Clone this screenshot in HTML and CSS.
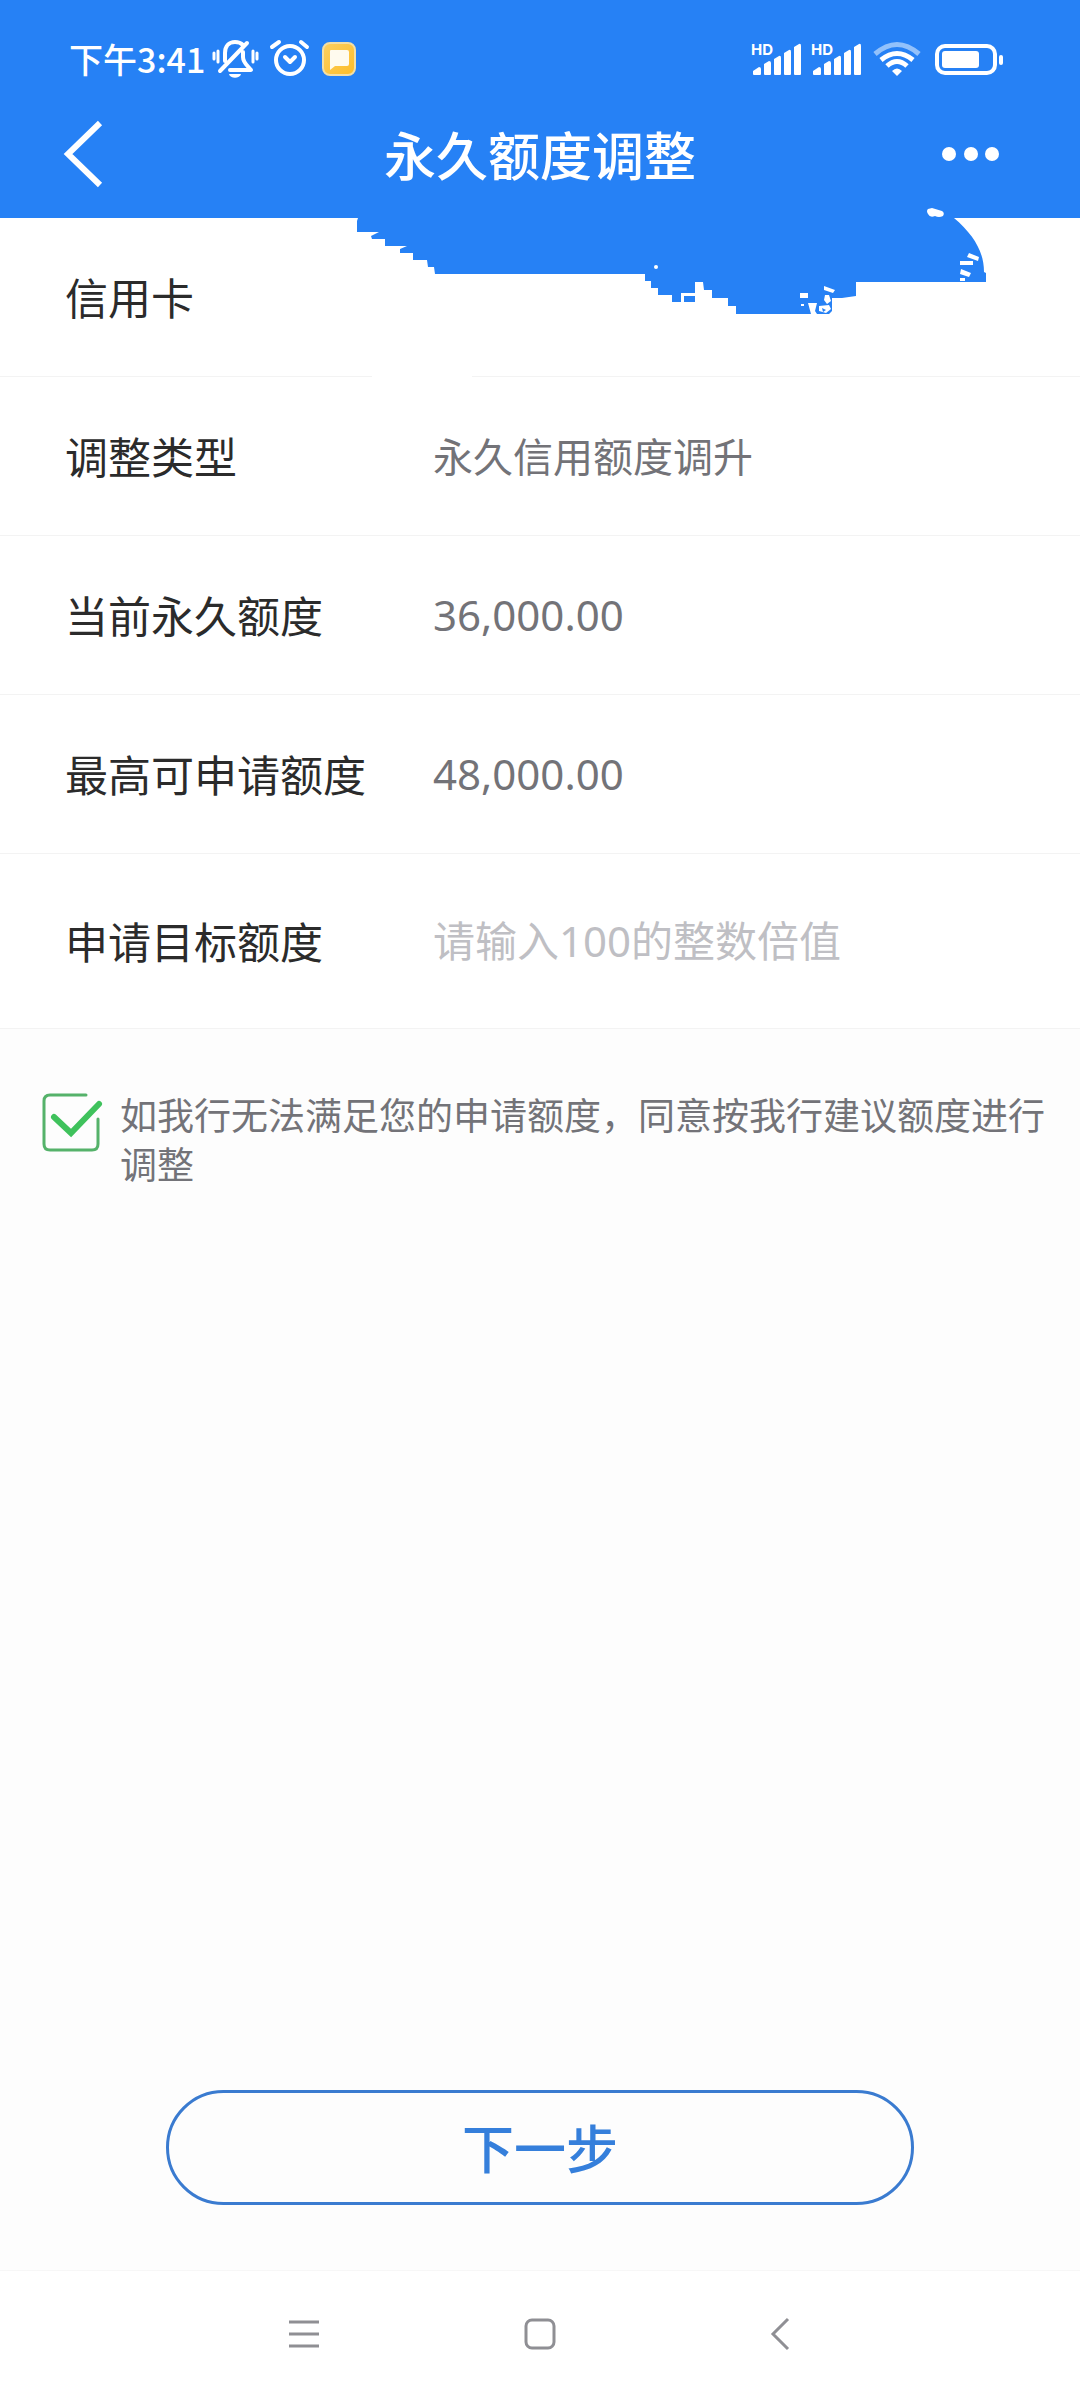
FILE: index.html
```html
<!DOCTYPE html>
<html lang="zh-CN">
  <head>
    <meta charset="UTF-8" />
    <meta name="viewport" content="width=device-width, initial-scale=1.0" />
    <title>永久额度调整</title>
    <link rel="stylesheet" href="styles.css">
  </head>
  <body>
    <header class="header">
      <!-- 状态栏 -->
      <div class="status">
        <span class="time">下午3:41</span>
        <svg class="icon" width="51" height="44" viewBox="0 0 51 44" fill="none" stroke="#fff" stroke-width="4" stroke-linecap="round" stroke-linejoin="round">
          <path d="M14 24V16C14 9 18 5 24 5C27 5 30 6 32 8M32 15V20C32 26 37 29 40 33H19M36 6L9 34" />
          <path d="M18 37H30C29 42 19 42 18 37Z" fill="#fff" stroke="none" />
          <path d="M3 16V22M7 14V25M42 14V25M46 16V22" stroke-width="3" />
        </svg>
        <svg class="icon" width="48" height="44" viewBox="0 0 48 44" fill="none" stroke="#fff" stroke-width="4" stroke-linecap="round" stroke-linejoin="round">
          <circle cx="22" cy="23" r="14" />
          <path d="M17 20L22 25L27 20M4 10L11 5M33 5L39 10" />
        </svg>
        <svg class="icon" width="34" height="34" viewBox="0 0 34 34">
          <defs>
            <linearGradient id="note" x1="0" y1="0" x2="1" y2="1">
              <stop offset="0" stop-color="#fbcf62" />
              <stop offset="1" stop-color="#fdbd28" />
            </linearGradient>
          </defs>
          <rect x="1" y="1" width="32" height="32" rx="7" fill="url(#note)" stroke="#f3dfa5" stroke-width="2" />
          <path d="M9 8H25Q27 8 27 10V22Q27 24 25 24H13L8 28V9Q8 8 9 8Z" fill="#fffbee" />
        </svg>

        <div class="status-right">
          <svg class="icon" width="50" height="46" viewBox="0 -6 50 46" fill="#fff">
            <text class="hd" x="0" y="13">HD</text>
            <path d="M2 29L8 25Q10 25 10 27V32Q10 33 9 33H3Q2 33 2 32ZM13 22L18 19Q20 19 20 21V32Q20 33 19 33H14Q13 33 13 32ZM23 17L28 14Q30 13 30 16V32Q30 33 29 33H24Q23 33 23 32ZM33 11L38 8Q40 7 40 10V32Q40 33 39 33H34Q33 33 33 32ZM43 5L48 2Q50 1 50 4V32Q50 33 49 33H44Q43 33 43 32Z" />
          </svg>
          <svg class="icon" width="50" height="46" viewBox="0 -6 50 46" fill="#fff">
            <text class="hd" x="0" y="13">HD</text>
            <path d="M2 29L8 25Q10 25 10 27V32Q10 33 9 33H3Q2 33 2 32ZM13 22L18 19Q20 19 20 21V32Q20 33 19 33H14Q13 33 13 32ZM23 17L28 14Q30 13 30 16V32Q30 33 29 33H24Q23 33 23 32ZM33 11L38 8Q40 7 40 10V32Q40 33 39 33H34Q33 33 33 32ZM43 5L48 2Q50 1 50 4V32Q50 33 49 33H44Q43 33 43 32Z" />
          </svg>
          <svg class="icon" width="54" height="36" viewBox="0 0 54 36" fill="none" stroke="#fff" stroke-width="5">
            <path d="M4 13Q26 -6 48 13" stroke="#92c1fb" />
            <path d="M10 19Q26 6 42 19" />
            <path d="M16 25Q26 16 36 25" />
            <path d="M21 30Q26 25 31 30L26 35Z" fill="#fff" stroke="none" />
          </svg>
          <svg class="icon" width="68" height="32" viewBox="0 0 68 32">
            <rect x="2" y="3" width="58" height="27" rx="8" fill="none" stroke="#fff" stroke-width="4" />
            <rect x="7" y="8" width="37" height="17" rx="3" fill="#fff" />
            <rect x="64" y="12" width="4" height="10" rx="2" fill="#fff" />
          </svg>
        </div>
      </div>

      <!-- 标题栏 -->
      <div class="titlebar">
        <button class="back" type="button" aria-label="返回">
          <svg class="icon" width="42" height="70" viewBox="0 0 42 70" fill="none" stroke="#fff" stroke-width="6">
            <path d="M37 4L5 35L37 66" />
          </svg>
        </button>
        <h1 class="title">永久额度调整</h1>
        <button class="more" type="button" aria-label="更多">
          <svg class="icon" width="60" height="20" viewBox="0 0 60 20" fill="#fff">
            <circle cx="9" cy="10" r="7" />
            <circle cx="31" cy="10" r="7" />
            <circle cx="52" cy="10" r="7" />
          </svg>
        </button>
      </div>

      <!-- 卡号上的涂抹 -->
      <svg class="scribble" width="632" height="174" viewBox="356 206 632 174" fill="#2681f5">
        <path d="M358 206V218L357 221V232H379L371 236L372 239H385V246H407L400 249V253H413V260H427L428 267H434L435 274H645V281H651V288H658V295H672V302H681V293H695V282H703L704 290H712V298H728V306H736V314H829L832 311V298H842L856 296V282H986V273L984 272C984 252 974 235 954 218V206Z" />
        <rect x="684" y="296" width="11" height="6" />
        <g fill="#fff">
          <circle cx="656" cy="267" r="2" />
          <path d="M928 209L932 208L942 211Q945 213 943 216Q939 218 935 216Q930 218 928 214Q926 211 928 209Z" />
          <path d="M969 253L979 257L978 261L967 257ZM960 261H973V265H960ZM961 269L971 273L969 277L960 274ZM960 278H965V281H960Z" />
          <path d="M800 293H808V298H800ZM801 304H804V306H801ZM808 303H817L815 311L817 314H811ZM824 286L835 290L833 293L824 290ZM825 295H829L831 301L827 304L824 300ZM819 306L829 305L831 309L826 313L819 311Z" />
          <!-- 第一行分隔线的缺口 -->
          <rect x="372" y="374" width="100" height="5" />
        </g>
        <path d="M822 308L826 310L823 312Z" />
      </svg>
    </header>

    <main class="main">
      <form class="form">
        <div class="row">
          <span class="label">信用卡</span>
        </div>
        <div class="row">
          <span class="label">调整类型</span>
          <span class="value">永久信用额度调升</span>
        </div>
        <div class="row">
          <span class="label">当前永久额度</span>
          <span class="value number">36,000.00</span>
        </div>
        <div class="row">
          <span class="label">最高可申请额度</span>
          <span class="value number">48,000.00</span>
        </div>
        <div class="row row-input">
          <label class="label" for="amount">申请目标额度</label>
          <input class="amount" id="amount" type="text" inputmode="numeric" placeholder="请输入100的整数倍值" />
        </div>
      </form>

      <label class="agree">
        <span class="check">
          <input class="check-input" type="checkbox" checked />
          <svg class="check-icon" width="64" height="64" viewBox="0 0 64 64" fill="none" stroke-linecap="round">
            <path d="M46 5H10Q4 5 4 11V54Q4 60 10 60H52Q58 60 58 54V29" stroke="#55b26a" stroke-width="3" />
            <path class="tick" d="M14 27L31 43L59 14" stroke="#3fc25c" stroke-width="6" />
          </svg>
        </span>
        <span class="agree-text">如我行无法满足您的申请额度，同意按我行建议额度进行调整</span>
      </label>

      <button class="next" type="button">下一步</button>
    </main>

    <!-- 系统导航 -->
    <nav class="nav">
      <button class="nav-btn" type="button" aria-label="菜单">
        <svg class="icon" width="48" height="48" viewBox="0 0 48 48" stroke="#8f8f94" stroke-width="3">
          <path d="M9 12H39M9 24H39M9 36H39" />
        </svg>
      </button>
      <button class="nav-btn" type="button" aria-label="主页">
        <svg class="icon" width="48" height="48" viewBox="0 0 48 48" fill="none" stroke="#8f8f94" stroke-width="3">
          <rect x="10" y="10" width="28" height="28" rx="6" />
        </svg>
      </button>
      <button class="nav-btn" type="button" aria-label="后退">
        <svg class="icon" width="48" height="48" viewBox="0 0 48 48" fill="none" stroke="#8f8f94" stroke-width="3">
          <path d="M36 9L21 24L36 39" />
        </svg>
      </button>
    </nav>
  </body>
</html>
```

FILE: styles.css
```css
* {
  box-sizing: border-box;
}

body {
  margin: 0;
  min-height: 100vh;
  display: flex;
  flex-direction: column;
  background: #fdfdfd;
  color: #2b2b2b;
  font-family: "Noto Sans CJK SC", sans-serif;
}

button {
  padding: 0;
  border: none;
  background: none;
  font-family: inherit;
  cursor: pointer;
}

.icon {
  display: block;
  flex: none;
}

/* 顶部 */
.header {
  position: relative;
  background: #2681f5;
  color: #fff;
}

.status {
  display: flex;
  align-items: center;
  gap: 6px;
  height: 96px;
  padding: 22px 77px 0 69px;
}

.time {
  font-size: 34px;
  font-weight: 500;
  line-height: 48px;
}

.status-right {
  display: flex;
  align-items: center;
  gap: 10px;
  margin-left: auto;
}

.hd {
  font-family: "Inter", sans-serif;
  font-size: 15px;
  font-weight: 700;
}

.titlebar {
  display: grid;
  grid-template-columns: 1fr auto 1fr;
  align-items: center;
  height: 122px;
  padding: 0 63px 6px;
}

.back {
  justify-self: start;
}

.more {
  justify-self: end;
  padding-right: 17px;
}

.title {
  margin: 0;
  font-size: 52px;
  font-weight: 500;
  line-height: 64px;
}

.scribble {
  position: absolute;
  top: 206px;
  left: 356px;
  z-index: 1;
}

/* 表单行 */
.main {
  flex: 1;
  display: flex;
  flex-direction: column;
}

.form {
  background: #fff;
}

.row {
  display: grid;
  grid-template-columns: 368px 1fr;
  align-items: center;
  min-height: 159px;
  padding: 0 65px;
  border-bottom: 1px solid #f3f3f3;
}

.row-input {
  min-height: 175px;
}

.label {
  padding-bottom: 3px;
  font-size: 43px;
  line-height: 60px;
}

.value {
  padding-bottom: 3px;
  color: #737378;
  font-size: 40px;
  line-height: 60px;
}

.number {
  padding-bottom: 0;
  font-family: "Noto Sans", sans-serif;
  font-size: 42px;
}

.amount {
  width: 100%;
  padding: 0;
  border: none;
  outline: none;
  background: none;
  color: #737378;
  font-family: "Noto Sans", "Noto Sans CJK SC", sans-serif;
  font-size: 42px;
  line-height: 60px;
}

.amount::placeholder {
  color: #bfbfc4;
  opacity: 1;
}

/* 同意条款 */
.agree {
  display: flex;
  align-items: flex-start;
  gap: 16px;
  padding: 61px 24px 0 40px;
}

.check {
  display: grid;
  flex: none;
}

.check-input,
.check-icon {
  grid-area: 1 / 1;
  width: 64px;
  height: 64px;
  margin: 0;
}

.check-input {
  appearance: none;
}

.check-icon {
  pointer-events: none;
}

.check-input:not(:checked) + .check-icon .tick {
  display: none;
}

.agree-text {
  color: #737378;
  font-size: 37px;
  line-height: 49px;
}

.next {
  height: 115px;
  margin: auto 166px 65px;
  padding-bottom: 3px;
  border: 3px solid #3a7bd0;
  border-radius: 58px;
  color: #357fdb;
  font-size: 52px;
  font-weight: 500;
}

/* 底部导航 */
.nav {
  display: flex;
  justify-content: center;
  align-items: center;
  gap: 188px;
  height: 130px;
  padding-bottom: 3px;
  border-top: 1px solid #f7f7f7;
  background: #fff;
}
```
